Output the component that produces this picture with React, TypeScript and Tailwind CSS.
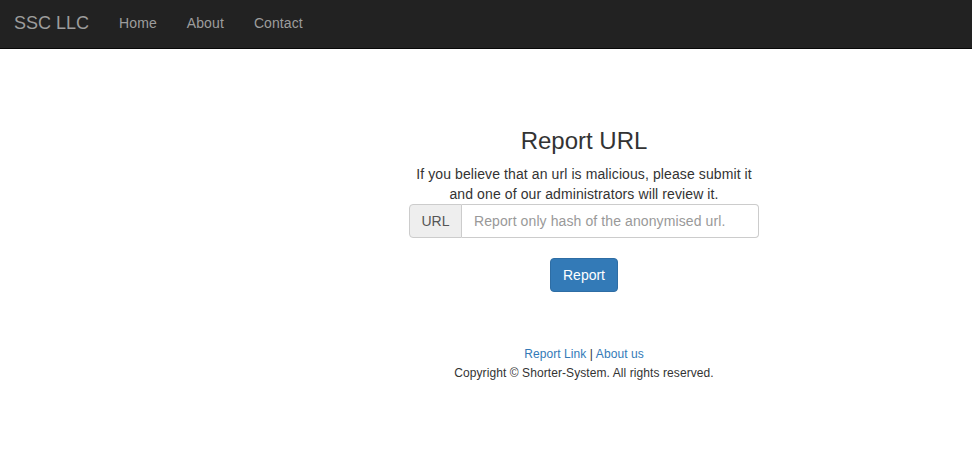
const NAV = ['Home', 'About', 'Contact']

export default function App() {
  return (
    <div className="min-h-screen bg-white text-[14px] leading-[20px] text-[#333] font-['Liberation_Sans',Arial,sans-serif]">
      <nav className="h-[49px] bg-[#222] border-b border-[#080808] flex items-center pb-[2px]">
        <span className="pl-[14px] pr-[15px] text-[18px] leading-[20px] text-[#9d9d9d]">SSC LLC</span>
        {NAV.map((label) => (
          <a key={label} href="#" className="px-[15px] text-[#9d9d9d] leading-[20px] tracking-[0.1px]">
            {label}
          </a>
        ))}
      </nav>

      <main className="flex justify-center pl-[196px]">
        <div className="w-[350px] flex flex-col items-center text-center">
          <h3 className="mt-[79px] mb-[10px] text-[24px] leading-[26px] font-normal">Report URL</h3>
          <p className="w-[350px] tracking-[0.1px]">
            If you believe that an url is malicious, please submit it and one of our administrators will review it.
          </p>
          <div className="w-[350px] h-[34px] flex">
            <span className="w-[53px] shrink-0 flex items-center justify-center bg-[#eee] border border-[#ccc] rounded-l-[4px] text-[#555]">
              URL
            </span>
            <input
              className="flex-1 min-w-0 border border-l-0 border-[#ccc] rounded-r-[4px] px-3 text-[#555] placeholder:text-[#999] outline-none tracking-[0.1px]"
              placeholder="Report only hash of the anonymised url."
            />
          </div>
          <button className="mt-[20px] h-[34px] px-3 bg-[#337ab7] border border-[#2e6da4] rounded-[4px] text-white">
            Report
          </button>

          <div className="mt-[53px] text-[12px] leading-[19px] tracking-[0.08px]">
            <a href="#" className="text-[#337ab7]">Report Link</a> | <a href="#" className="text-[#337ab7]">About us</a>
          </div>
          <div className="text-[12px] leading-[19px] tracking-[0.08px]">Copyright © Shorter-System. All rights reserved.</div>
        </div>
      </main>
    </div>
  )
}
